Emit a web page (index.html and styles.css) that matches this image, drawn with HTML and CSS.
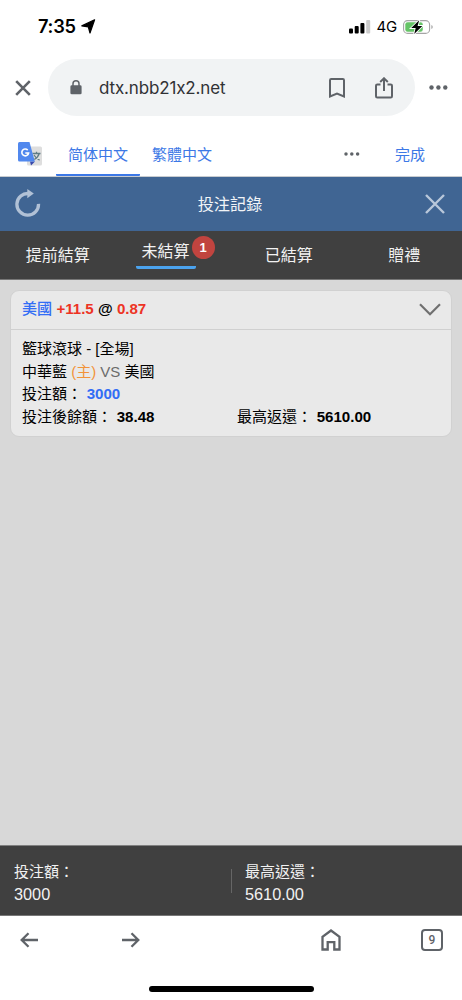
FILE: index.html
```
<!DOCTYPE html>
<html lang="zh-Hant">

<head>
    <meta charset="utf-8">
    <title>投注記錄</title>
    <meta name="viewport" content="width=device-width, initial-scale=1">
    <link rel="stylesheet" href="styles.css">
</head>

<body>
    <div class="status-bar">
        <span class="time">7:35</span>
        <svg class="location" width="15" height="15" viewBox="0 0 15 15"><path d="M13.600.8 9 14 7.300 7.800.8 6.900Z" fill="#000" stroke="#000" stroke-width="1.200" stroke-linejoin="round"/></svg>
        <svg class="signal" width="22" height="14" viewBox="0 0 22 14">
            <rect x="0" y="8.500" width="4" height="5" rx="1"/>
            <rect x="5.700" y="6" width="4" height="7.500" rx="1"/>
            <rect x="11.400" y="3" width="4" height="10.500" rx="1"/>
            <rect x="17.200" y="0" width="4" height="13.500" rx="1" fill="#ccc"/>
        </svg>
        <span class="network">4G</span>
        <svg class="battery" width="31" height="16" viewBox="0 0 31 16">
            <rect x=".6" y="1.600" width="26" height="12.800" rx="4" fill="#fff" stroke="#a5a5a5" stroke-width="1.100"/>
            <rect x="2.300" y="3.300" width="17.500" height="9.400" rx="2.300" fill="#65c466"/>
            <path d="M28.300 6v4q1.500-.6 1.500-2t-1.500-2Z" fill="#aaa"/>
            <path d="M16.200 1.300 8.200 9h4.500l-1.500 5.900L19.300 7h-4.700Z" fill="#000" stroke="#fff" stroke-width="1.800" paint-order="stroke"/>
        </svg>
    </div>

    <div class="address-bar">
        <svg class="stop" width="16" height="16" viewBox="0 0 16 16"><path d="m1.200 1.200 13.600 13.600m0-13.600L1.200 14.800"/></svg>
        <div class="url-box">
            <svg class="lock" width="12" height="15" viewBox="0 0 12 15"><path d="M3 6V3.800a3 3 0 0 1 6 0V6" fill="none" stroke="#5f6368" stroke-width="1.500"/><rect x=".4" y="5.300" width="11.200" height="9" rx="1.400" fill="#5f6368"/></svg>
            <span class="url">dtx.nbb21x2.net</span>
            <svg class="bookmark" width="16" height="20" viewBox="0 0 16 20"><path d="M1 2.200q0-1.200 1.200-1.200h11.600Q15 1 15 2.200v16.300l-7-3-7 3Z"/></svg>
            <svg class="share" width="18" height="22" viewBox="0 0 18 22"><path d="M5.500 7.500H2.300Q1 7.500 1 8.800v10.400q0 1.300 1.300 1.300h13.400q1.300 0 1.300-1.300V8.800q0-1.300-1.300-1.300h-3.200M9 14V1.500M5.200 5 9 1.300 12.800 5"/></svg>
        </div>
        <svg class="more" width="19" height="5" viewBox="0 0 19 5"><circle cx="2.500" cy="2.500" r="2.200"/><circle cx="9.400" cy="2.500" r="2.200"/><circle cx="16.300" cy="2.500" r="2.200"/></svg>
    </div>

    <div class="translate-bar">
        <svg class="translate-logo" width="25" height="24" viewBox="0 0 25 24">
            <rect x="9" y="4.500" width="15" height="19" rx="1.500" fill="#dedede"/>
            <path d="M14.500 11.500h8M18.500 9.800v1.700M21.200 11.500q-1.200 4-5 6M16 13q1.800 3.200 5.600 5.200" fill="none" stroke="#607d86" stroke-width="1.300"/>
            <path d="m12 19.500 5 0-4 4Z" fill="#3949ab"/>
            <path d="M1.500 0h10l5.300 19.500H1.500Q0 19.500 0 18V1.500Q0 0 1.500 0Z" fill="#5188ee"/>
            <path d="M9.700 8.100A3.400 3.400 0 1 0 10.600 11H7.300" fill="none" stroke="#fff" stroke-width="1.600"/>
        </svg>
        <span class="lang active">简体中文</span>
        <span class="lang">繁體中文</span>
        <svg class="more-small" width="16" height="4" viewBox="0 0 16 4"><circle cx="2" cy="2" r="1.750"/><circle cx="7.800" cy="2" r="1.750"/><circle cx="13.600" cy="2" r="1.750"/></svg>
        <span class="done">完成</span>
    </div>

    <div class="header">
        <svg class="refresh" width="26" height="28" viewBox="0 0 26 28"><path d="M23.500 14.800A10.800 10.800 0 1 1 14 4.600" fill="none" stroke="#b1c1d6" stroke-width="3.300"/><path d="m12.300 0 6.500 4.600-6.500 4.600Z" fill="#b1c1d6"/></svg>
        <h1>投注記錄</h1>
        <svg class="close" width="20" height="20" viewBox="0 0 20 20"><path d="m1 1 18 18M19 1 1 19" fill="none" stroke="#b9c7da" stroke-width="2.400"/></svg>
    </div>

    <div class="tabs">
        <div class="tab">提前結算</div>
        <div class="tab"><span class="selected">未結算<b class="badge">1</b></span></div>
        <div class="tab">已結算</div>
        <div class="tab">贈禮</div>
    </div>

    <div class="content">
        <div class="bet">
            <div class="bet-title">
                <p><span class="team">美國</span> <span class="red">+11.5</span> @ <span class="red">0.87</span></p>
                <svg width="22" height="13" viewBox="0 0 22 13"><path d="m1 1.300 10 10 10-10" fill="none" stroke="#707070" stroke-width="2.200"/></svg>
            </div>
            <div class="bet-info">
                <p>籃球滾球 - [全場]</p>
                <p>中華藍 <span class="orange">(主)</span> <span class="gray">VS</span> 美國</p>
                <p>投注額： <b class="blue">3000</b></p>
                <div class="row">
                    <p>投注後餘額： <b>38.48</b></p>
                    <p>最高返還： <b>5610.00</b></p>
                </div>
            </div>
        </div>
    </div>

    <div class="total">
        <div class="total-item">
            <p>投注額：</p>
            <p class="num">3000</p>
        </div>
        <div class="total-item">
            <p>最高返還：</p>
            <p class="num">5610.00</p>
        </div>
    </div>

    <div class="toolbar">
        <svg class="back" width="19" height="16" viewBox="0 0 19 16"><path d="M18 8H1.800M8.500 1.200 1.700 8l6.800 6.800"/></svg>
        <svg class="forward" width="19" height="16" viewBox="0 0 19 16"><path d="M1 8h16.200M10.500 1.200 17.300 8l-6.800 6.800"/></svg>
        <svg class="home" width="20" height="22" viewBox="0 0 20 22"><path d="M1.500 20.500V7.800L10 1.500l8.500 6.300v12.700h-5.200v-7.300H6.700v7.300Z"/></svg>
        <span class="tab-count">9</span>
    </div>
    <div class="home-indicator"></div>
</body>

</html>
```

FILE: styles.css
```
* {
    margin: 0;
    padding: 0;
    box-sizing: border-box;
}

body {
    display: flex;
    flex-direction: column;
    height: 1000px;
    background: #fff;
    color: #000;
    font: 15px/22.7px "Liberation Sans", "Noto Sans CJK TC", sans-serif;
    overflow: hidden;
}

svg {
    display: block;
    flex: none;
}

.status-bar {
    display: flex;
    align-items: center;
    height: 59px;
    padding: 0 28px 6px 38px;
    font-family: Inter, sans-serif;
}

.time {
    width: 43px;
    font-size: 18.3px;
    font-weight: 600;
    letter-spacing: -.3px;
}

.signal {
    margin-left: auto;
}

.network {
    margin: 0 6px 0 6px;
    padding-top: 1px;
    font-size: 15px;
    letter-spacing: -.2px;
}

.address-bar {
    display: flex;
    align-items: center;
    height: 57px;
    padding: 0 14px 0 15px;
}

.stop,
.bookmark,
.share {
    fill: none;
    stroke: #5f6368;
    stroke-width: 2;
}

.stop {
    stroke-width: 2.6;
}

.url-box {
    display: flex;
    align-items: center;
    width: 367px;
    height: 57px;
    margin-left: 17px;
    padding: 0 22px 0 22px;
    border-radius: 29px;
    background: #f1f3f4;
}

.url {
    margin-left: 17px;
    padding-top: 1px;
    color: #303134;
    font-family: Inter, sans-serif;
    font-size: 17px;
    font-feature-settings: "calt" 0;
    letter-spacing: -.15px;
}

.bookmark {
    margin-left: auto;
}

.share {
    margin-left: 30px;
}

.more,
.more-small {
    fill: #5f6368;
}

.more {
    margin-left: auto;
}

.translate-bar {
    display: flex;
    align-items: center;
    height: 61px;
    padding: 16px 37px 0 18px;
    border-bottom: 1px solid #c8ccd0;
    color: #3c78e6;
    font-family: "Noto Sans CJK TC", sans-serif;
}

.lang {
    height: 44px;
    padding: 0 12px;
    line-height: 43px;
}

.lang.active {
    margin-left: 13px;
    border-bottom: 2px solid #3c78e6;
    border-radius: 1px;
    font-family: "Noto Sans CJK SC", sans-serif;
}

.more-small {
    margin-left: auto;
}

.done {
    margin-left: 35px;
}

.header {
    display: flex;
    align-items: center;
    height: 54px;
    padding: 0 17px 0 15px;
    background: #406593;
    color: #f1f4f7;
}

.refresh {
    margin-top: -3px;
}

.header h1 {
    flex: 1;
    margin-right: 6px;
    font-size: 16.2px;
    font-weight: normal;
    text-align: center;
}

.tabs {
    display: grid;
    grid-template-columns: repeat(4, 1fr);
    height: 49px;
    border-bottom: 1px solid #777;
    background: #404040;
    color: #f2f2f2;
    font-size: 16px;
    text-align: center;
}

.tab {
    line-height: 50px;
}

.selected {
    position: relative;
    display: block;
    width: 60px;
    height: 38px;
    margin-left: 20px;
    border-bottom: 3px solid #4ba3ee;
    border-radius: 2px;
    line-height: 41px;
}

.badge {
    position: absolute;
    top: 5px;
    right: -19px;
    width: 23px;
    height: 23px;
    border-radius: 50%;
    background: #c1443f;
    color: #fff;
    font-size: 13px;
    line-height: 23px;
}

.content {
    flex: 1;
    padding: 10px;
    background: #d8d8d8;
}

.bet {
    height: 147px;
    border: 1px solid #d1d1d1;
    border-radius: 9px;
    background: #e9e9e9;
}

.bet-title {
    display: flex;
    align-items: center;
    justify-content: space-between;
    height: 39px;
    padding: 0 10px 2px 11px;
    border-bottom: 1px solid #d0d0d0;
    font-size: 15.1px;
    font-weight: bold;
}

.team {
    color: #326df5;
    font-weight: 500;
}

.bet-info {
    padding: 8px 11px;
}

.bet-info b {
    margin-left: .5px;
    font-size: 15.1px;
}

.row {
    display: grid;
    grid-template-columns: 215px 1fr;
}

.blue {
    color: #326df5;
}

.red {
    color: #ed3324;
}

.orange {
    color: #f29339;
}

.gray {
    color: #6b6b6b;
}

.total {
    display: grid;
    grid-template-columns: 1fr 1fr;
    height: 71px;
    border-top: 1px solid #808080;
    border-bottom: 1px solid #777;
    background: #404040;
    color: #f2f2f2;
}

.total-item {
    position: relative;
    padding: 15px 14px 0;
}

.total-item + .total-item:before {
    content: "";
    position: absolute;
    top: 23px;
    left: 0;
    width: 1px;
    height: 24px;
    background: #666;
}

.num {
    margin-top: -1px;
    font-size: 16.3px;
}

.toolbar {
    display: flex;
    align-items: center;
    height: 70px;
    padding: 0 19px 22px 20px;
}

.toolbar svg {
    fill: none;
    stroke: #5f6368;
    stroke-width: 2.3;
}

.forward {
    margin-left: 82px;
}

.home {
    margin-left: auto;
}

.tab-count {
    width: 22px;
    height: 22px;
    margin-left: 80px;
    border: 2px solid #5f6368;
    border-radius: 4px;
    color: #5f6368;
    font: 500 12px/18px Roboto, sans-serif;
    text-align: center;
}

.home-indicator {
    width: 165px;
    height: 6px;
    margin: 0 auto 8px;
    border-radius: 3px;
    background: #000;
}
```
